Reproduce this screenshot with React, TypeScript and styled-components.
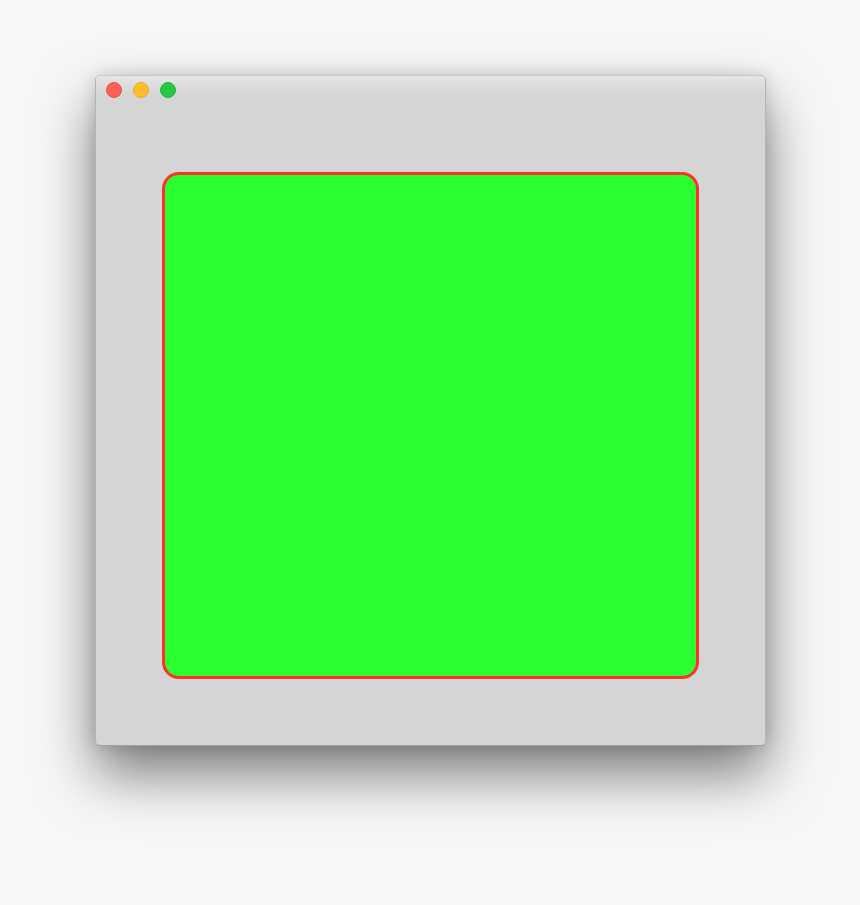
import React from 'react';
import styled, { createGlobalStyle } from 'styled-components';

const GlobalStyle = createGlobalStyle`
  html, body {
    margin: 0;
    padding: 0;
    background: #f7f7f7;
    font-family: "Liberation Sans", Arial, sans-serif;
  }
`;

const Page = styled.div`
  width: 860px;
  height: 905px;
  padding: 75px 0 0 95px;
  box-sizing: border-box;
`;

const Window = styled.div`
  width: 671px;
  height: 671px;
  box-sizing: border-box;
  display: flex;
  flex-direction: column;
  background: #d5d5d5;
  border: 1px solid #b4b4b4;
  border-top-color: #c8c8c8;
  border-bottom-color: #a2a2a2;
  border-radius: 5px;
  box-shadow: 0 28px 55px rgba(0, 0, 0, 0.5), 0 0 16px rgba(0, 0, 0, 0.14);
  overflow: hidden;
`;

const TitleBar = styled.div`
  height: 28px;
  flex: none;
  display: flex;
  align-items: center;
  gap: 11px;
  padding-left: 10px;
  background: linear-gradient(#e6e6e6, #d6d6d6 60%, #d5d5d5);
`;

const Light = styled.span<{ $color: string; $edge: string }>`
  width: 16px;
  height: 16px;
  border-radius: 50%;
  box-sizing: border-box;
  background: ${p => p.$color};
  border: 1px solid ${p => p.$edge};
`;

const Content = styled.div`
  flex: 1;
  display: flex;
  padding: 68px 66px 66px 66px;
`;

const GreenBox = styled.div`
  flex: 1;
  background: #2aff2f;
  border: 3px solid #ff2f2a;
  border-radius: 17px;
`;

const App: React.FC = () => (
  <>
    <GlobalStyle />
    <Page>
      <Window>
        <TitleBar>
          <Light $color="#ff5f57" $edge="#e9524a" />
          <Light $color="#ffbd2e" $edge="#e5a72a" />
          <Light $color="#28c940" $edge="#24b238" />
        </TitleBar>
        <Content>
          <GreenBox />
        </Content>
      </Window>
    </Page>
  </>
);

export default App;
